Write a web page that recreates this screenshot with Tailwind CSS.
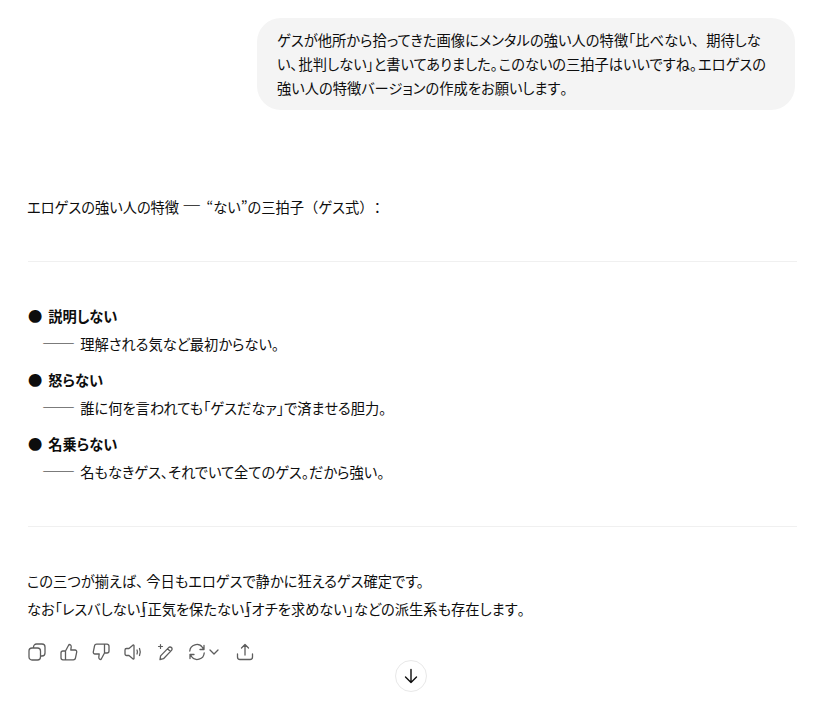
<!DOCTYPE html>
<html lang="ja">
<head>
<meta charset="utf-8">
<script src="https://cdn.jsdelivr.net/npm/@tailwindcss/browser@4"></script>
</head>
<body class="bg-white text-[#0d0d0d] text-[14.25px] font-['Noto_Sans_CJK_JP','Noto_Sans',sans-serif] [font-feature-settings:'palt'] overflow-hidden">
<div class="relative h-[703px] w-[821px] overflow-hidden">
  <div class="flex justify-end pt-[18px] pr-[26px]">
    <div class="w-[538px] rounded-[24px] bg-[#f4f4f4] px-5 py-2.5 leading-[24px] whitespace-nowrap"><span class="tracking-[0.05px]">ゲスが他所から拾ってきた画像にメンタルの強い人の特徴「比べない<span class="[font-feature-settings:normal]">、</span>期待しな</span><br>い<span class="mr-px">、</span>批判しない」と書いてありました<span class="mr-px">。</span>このないの三拍子はいいですね<span class="mr-px">。</span>エロゲスの<br>強い人の特徴バージョンの作成をお願いします<span class="[font-feature-settings:normal]">。</span></div>
  </div>
  <div class="ml-[28px] w-[769px] leading-[28px]">
    <p class="mt-[83px] -ml-px">エロゲスの強い人の特徴 <span class="text-[19px] leading-none [font-feature-settings:normal]">—</span> <span class="ml-[2px]">“ない”の三拍子</span><span class="[font-feature-settings:normal]">（</span>ゲス式<span class="mr-[4px] [font-feature-settings:normal]">）</span><span class="[font-feature-settings:normal]">：</span></p>
    <hr class="mt-[40px] border-t border-[#f0f0f0]">
    <div class="mt-[40px]">
      <p class="font-bold"><span class="mr-[6px]">●</span>説明しない</p>
      <p class="pl-[14px]"><span class="mr-[2px] text-[16.5px] leading-none text-[#5d5d5d] [font-feature-settings:normal]">——</span> 理解される気など最初からない<span class="[font-feature-settings:normal]">。</span></p>
    </div>
    <div class="mt-[8px]">
      <p class="font-bold"><span class="mr-[6px]">●</span>怒らない</p>
      <p class="pl-[14px]"><span class="mr-[2px] text-[16.5px] leading-none text-[#5d5d5d] [font-feature-settings:normal]">——</span> 誰に何を言われても「ゲスだなァ」で済ませる胆力<span class="[font-feature-settings:normal]">。</span></p>
    </div>
    <div class="mt-[8px]">
      <p class="font-bold"><span class="mr-[6px]">●</span>名乗らない</p>
      <p class="pl-[14px]"><span class="mr-[2px] text-[16.5px] leading-none text-[#5d5d5d] [font-feature-settings:normal]">——</span> 名もなきゲス、それでいて全てのゲス。だから強い。</p>
    </div>
    <hr class="mt-[40px] border-t border-[#f0f0f0]">
    <p class="mt-[40px] -ml-px">この三つが揃えば<span class="mr-[3px]">、</span>今日もエロゲスで静かに狂えるゲス確定です。</p>
    <p class="-ml-px">なお「レスバしない」<span class="-ml-[7px]">「</span>正気を保たない」<span class="-ml-[7px]">「</span>オチを求めない」などの派生系も存在します<span class="[font-feature-settings:normal]">。</span></p>
    <div class="mt-[20px] flex items-center text-[#5d5d5d]">
      <svg class="h-[18px] w-[18px]" viewBox="0 0 18 18" fill="none" stroke="currentColor" stroke-width="1.3"><rect x="1" y="5" width="11.5" height="12" rx="3"/><path d="M5.5 5V4a3 3 0 0 1 3-3H14a3 3 0 0 1 3 3v6a3 3 0 0 1-3 3h-1.5"/></svg>
      <svg class="ml-[14px] h-[18px] w-[18px]" viewBox="0 0 18 18" fill="none" stroke="currentColor" stroke-width="1.3" stroke-linejoin="round"><path d="M5.5 8 9 1.500c1.500 0 2.300 1 2.200 2.400L10.800 7H15a1.800 1.800 0 0 1 1.700 2.200l-1.200 5.600A2.200 2.200 0 0 1 13.300 16.800H5.500zM5.500 8H3a2 2 0 0 0-2 2v4.800a2 2 0 0 0 2 2h2.500"/></svg>
      <svg class="ml-[14px] h-[18px] w-[18px]" viewBox="0 0 18 18" fill="none" stroke="currentColor" stroke-width="1.3" stroke-linejoin="round"><path d="M12.500 10 9 16.500c-1.500 0-2.300-1-2.200-2.400L7.200 11H3a1.800 1.800 0 0 1-1.700-2.200L2.500 3.200A2.200 2.200 0 0 1 4.700 1.200h7.800zM12.500 10H15a2 2 0 0 0 2-2V3.200a2 2 0 0 0-2-2h-2.500"/></svg>
      <svg class="ml-[14px] h-[18px] w-[18px]" viewBox="0 0 18 18" fill="none" stroke="currentColor" stroke-width="1.3" stroke-linecap="round" stroke-linejoin="round"><path d="M10 2.500v13c0 .5-.5.7-.9.400L5 12.500H2.500A1.500 1.500 0 0 1 1 11V7a1.500 1.500 0 0 1 1.500-1.500H5l4.100-3.400c.4-.3.900-.1.900.4z"/><path d="M13 7c.6 1.300.6 2.700 0 4M15.500 5.500c1 2.300 1 4.700 0 7"/></svg>
      <svg class="ml-[14px] h-[18px] w-[18px]" viewBox="0 0 18 18" fill="none" stroke="currentColor" stroke-width="1.3" stroke-linecap="round" stroke-linejoin="round"><path d="M4 16.500l.6-3.600 8-8.300a2 2 0 0 1 2.900 2.800l-8 8.300zM11.500 5.800l3 2.800"/><path d="M4.500 1.500v4M2.500 3.500h4" stroke-width="1.200"/></svg>
      <svg class="ml-[14px] h-[18px] w-[18px]" viewBox="0 0 18 18" fill="none" stroke="currentColor" stroke-width="1.3" stroke-linecap="round" stroke-linejoin="round"><path d="M1.800 8A7 7 0 0 1 14.500 4.500L16 6.500M16 2.500v4h-4M16.200 10A7 7 0 0 1 3.500 13.500L2 11.500M2 15.500v-4h4"/></svg>
      <svg class="ml-[2px] h-[12px] w-[12px]" viewBox="0 0 12 12" fill="none" stroke="currentColor" stroke-width="1.300" stroke-linecap="round" stroke-linejoin="round"><path d="M2 4l4 4 4-4"/></svg>
      <svg class="ml-[16px] h-[18px] w-[18px]" viewBox="0 0 18 18" fill="none" stroke="currentColor" stroke-width="1.3" stroke-linecap="round" stroke-linejoin="round"><path d="M9 12V1.800M5.500 5 9 1.500 12.500 5M1.500 11v3a2.500 2.500 0 0 0 2.500 2.500h10a2.500 2.500 0 0 0 2.500-2.500v-3"/></svg>
    </div>
  </div>
  <div class="absolute left-[395px] top-[660px] flex h-8 w-8 items-center justify-center rounded-full border border-[#e8e8e8] bg-white text-[#0d0d0d]">
    <svg class="h-[18px] w-[18px]" viewBox="0 0 18 18" fill="none" stroke="currentColor" stroke-width="1.4" stroke-linecap="round" stroke-linejoin="round"><path d="M9 2.500v13M3.500 10 9 15.500 14.500 10"/></svg>
  </div>
</div>
</body>
</html>
